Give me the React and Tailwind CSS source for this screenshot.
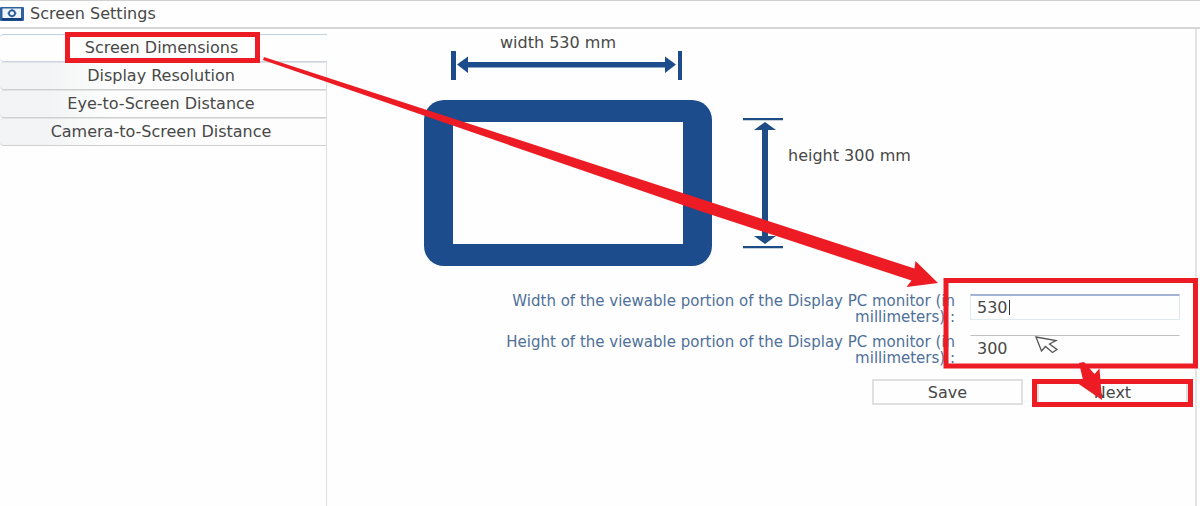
import React from "react";

const TABS = [
  "Screen Dimensions",
  "Display Resolution",
  "Eye-to-Screen Distance",
  "Camera-to-Screen Distance",
];

function MonitorIcon() {
  return (
    <svg className="shrink-0" width="24" height="14" viewBox="0 0 24 14" aria-hidden="true">
      <rect x="0" y="0" width="24" height="14" rx="1" fill="#2f629c" />
      <rect x="2.500" y="1.500" width="18.500" height="9.500" fill="#eef4fa" />
      <rect x="2" y="11" width="20" height="2.500" fill="#123f7c" />
      <ellipse cx="12" cy="6.200" rx="3" ry="2.900" fill="none" stroke="#2b5c98" strokeWidth="1.800" />
      <path d="M12 1.800v1.500M12 9v1.500M7.500 6.200h1.500M15 6.200h1.500" stroke="#2b5c98" strokeWidth="1" />
    </svg>
  );
}

function Tab({ label, active }) {
  return (
    <button
      type="button"
      role="tab"
      aria-selected={active}
      className={
        active
          ? "h-7 w-full rounded-l border-y border-t-[#c3d0df] border-b-[#ccd3e6] bg-[#fdfefd] pr-1 text-center"
          : "h-7 w-full rounded-l border-y border-r border-t-[#e2e3e3] border-r-[#dddede] border-b-[#cfd0d0] bg-linear-to-r from-[#f3f4f5] from-15% to-[#fcfdfc] to-35% pr-1 text-center"
      }
    >
      {label}
    </button>
  );
}

function Diagram() {
  return (
    <div className="flex flex-col pl-[97px] pt-[5px]">
      <div className="flex w-72 flex-col items-center pr-1">
        <p className="h-[17px] pr-4 leading-[18px]">width 530 mm</p>
        <svg width="232" height="29" viewBox="0 0 232 29" fill="#1c4c8c" aria-hidden="true">
          <path d="M1 0h5v29H1zM228 0h4v29h-4z" />
          <path d="M7 13.500 18 5.500V11h197V5.500L226 13.500 215 22v-5.500H18V22z" />
        </svg>
      </div>
      <div className="mt-5 flex">
        <div className="h-[166px] w-72 rounded-[20px] bg-[#1c4c8c] px-[29px] py-[22px]">
          <div className="h-full bg-[#fdfefd]" />
        </div>
        <svg
          className="ml-[31px] mt-[18px]"
          width="40"
          height="131"
          viewBox="0 0 40 131"
          fill="#1d4d84"
          aria-hidden="true"
        >
          <path d="M0 0h40v2.200H0zM0 128h40v2.200H0z" />
          <path d="M22 4 33 12h-8v106h8l-11 8-11-8h8V12h-8z" />
        </svg>
        <p className="ml-[5px] mt-[46px] leading-5">height 300 mm</p>
      </div>
    </div>
  );
}

function Field({ id, label, value, focused }) {
  return (
    <div className="flex items-start justify-end gap-[15px]">
      <label htmlFor={id} className="-mt-px w-[515px] text-right text-[15px] leading-4 text-[#50709a]">
        {label} (in
        <br />
        millimeters) :
      </label>
      <div className="relative">
        <input
          id={id}
          type="text"
          defaultValue={value}
          className={
            focused
              ? "block h-[26px] w-[210px] border border-t-2 border-[#dfeaef] border-t-[#a3b3d6] bg-[#fdfefd] px-1.5 outline-none"
              : "block h-[26px] w-[210px] border border-transparent border-t-[#bfc0c0] bg-[#fdfefd] px-1.5 outline-none"
          }
        />
        {focused && <span className="absolute left-[39px] top-1.5 h-[15px] w-px bg-[#333]" />}
      </div>
    </div>
  );
}

function Annotations() {
  return (
    <svg
      className="pointer-events-none absolute left-0 top-0"
      width="1200"
      height="506"
      viewBox="0 0 1200 506"
      aria-hidden="true"
    >
      <path
        d="M1036 337 1056 340.500 1049.500 344 1057 349.500 1052.500 352.500 1045.500 346.500 1041.500 351z"
        fill="#fdfefd"
        stroke="#555"
        strokeWidth="1.3"
      />
      <g fill="none" stroke="#ed1c24" strokeWidth="5">
        <rect x="67.500" y="34.500" width="190" height="26" />
        <rect x="946" y="280.500" width="249.500" height="85.500" />
        <rect x="1034.500" y="381.500" width="156" height="23" />
      </g>
      <g fill="#ed1c24">
        <path d="M264 57 914.500 268.500 915.500 261 938 283 906.500 287 911.500 280.500 700 211 263 60z" />
        <path d="M1079 363 1084 362 1094.500 374 1099.500 368.500 1102 400 1078 383.500 1083 380z" />
      </g>
    </svg>
  );
}

export default function App() {
  return (
    <div className="relative flex min-h-screen flex-col overflow-hidden bg-[#fdfefd] font-['DejaVu_Sans',sans-serif] text-base text-[#484848]">
      <header className="flex h-[29px] items-center gap-1.5 border-t border-b-2 border-t-[#d0d1d1] border-b-[#d5d6d5]">
        <MonitorIcon />
        <h1 className="leading-5">Screen Settings</h1>
      </header>
      <div className="flex flex-1">
        <nav className="flex w-[327px] shrink-0 flex-col pt-[5px]" role="tablist" aria-label="Screen settings">
          {TABS.map((label, i) => (
            <Tab key={label} label={label} active={i === 0} />
          ))}
          <div className="flex-1 border-r border-[#dddede]" />
        </nav>
        <main className="mr-[3px] flex-1 border-r-2 border-[#e3e4e4]">
          <Diagram />
          <form className="mt-7 flex flex-col gap-2.5 pr-[15px]" onSubmit={(e) => e.preventDefault()}>
            <Field
              id="screen-width"
              label="Width of the viewable portion of the Display PC monitor"
              value="530"
              focused
            />
            <Field
              id="screen-height"
              label="Height of the viewable portion of the Display PC monitor"
              value="300"
            />
            <div className="-mr-2 mt-[3px] flex justify-end gap-3.5">
              <button type="button" className="h-[26px] w-[151px] border-2 border-[#dfe0e0] bg-[#fdfefd]">
                Save
              </button>
              <button type="submit" className="h-[26px] w-[151px] border-2 border-[#dfe0e0] bg-[#fdfefd]">
                Next
              </button>
            </div>
          </form>
        </main>
      </div>
      <Annotations />
    </div>
  );
}
